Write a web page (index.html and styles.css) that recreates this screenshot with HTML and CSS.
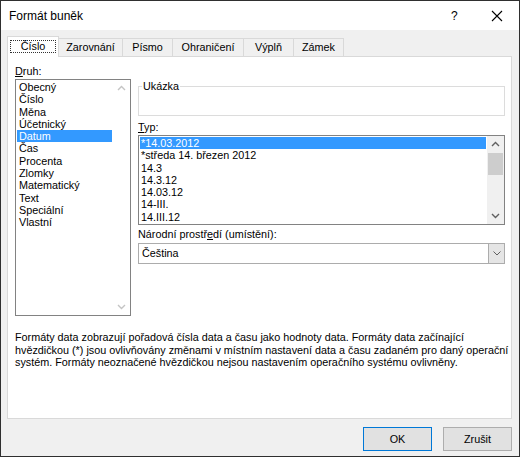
FILE: index.html
```html
<!DOCTYPE html>
<html lang="cs">
<head>
<meta charset="utf-8">
<title>Formát buněk</title>
<link rel="stylesheet" href="styles.css">
</head>
<body>
<div class="window">
  <div class="titlebar">
    <span class="title">Formát buněk</span>
    <span class="help">?</span>
    <svg class="close" width="12" height="12" viewBox="0 0 12 12"><path d="M1 1 L11 11 M11 1 L1 11" stroke="#000" stroke-width="1.1" fill="none"/></svg>
  </div>
  <div class="content">
    <div class="tabs">
      <div class="tab active"><span class="focus">Číslo</span></div>
      <div class="tab t-align">Zarovnání</div>
      <div class="tab t-font">Písmo</div>
      <div class="tab t-border">Ohraničení</div>
      <div class="tab t-fill">Výplň</div>
      <div class="tab t-lock">Zámek</div>
    </div>
    <div class="panel">
      <div class="top">
        <div class="left">
          <div class="label label-kind"><u>D</u>ruh:</div>
          <div class="listbox kinds">
            <ul class="items">
              <li>Obecný</li>
              <li>Číslo</li>
              <li>Měna</li>
              <li>Účetnický</li>
              <li class="selected">Datum</li>
              <li>Čas</li>
              <li>Procenta</li>
              <li>Zlomky</li>
              <li>Matematický</li>
              <li>Text</li>
              <li>Speciální</li>
              <li>Vlastní</li>
            </ul>
            <div class="vscroll disabled">
              <svg class="arrow" width="9" height="6" viewBox="0 0 9 6"><path d="M1 5 L4.5 1.5 L8 5" stroke="#c4c4c4" stroke-width="1.4" fill="none"/></svg>
              <div class="track"></div>
              <svg class="arrow" width="9" height="6" viewBox="0 0 9 6"><path d="M1 1 L4.5 4.5 L8 1" stroke="#c4c4c4" stroke-width="1.4" fill="none"/></svg>
            </div>
          </div>
        </div>
        <div class="right">
          <fieldset class="sample">
            <legend>Ukázka</legend>
          </fieldset>
          <div class="label label-type"><u>T</u>yp:</div>
          <div class="listbox types">
            <ul class="items">
              <li class="selected">*14.03.2012</li>
              <li>*středa 14. březen 2012</li>
              <li>14.3</li>
              <li>14.3.12</li>
              <li>14.03.12</li>
              <li>14-III.</li>
              <li>14.III.12</li>
            </ul>
            <div class="vscroll">
              <svg class="arrow" width="9" height="6" viewBox="0 0 9 6"><path d="M1 5 L4.5 1.5 L8 5" stroke="#606060" stroke-width="1.4" fill="none"/></svg>
              <div class="track"><div class="thumb"></div></div>
              <svg class="arrow" width="9" height="6" viewBox="0 0 9 6"><path d="M1 1 L4.5 4.5 L8 1" stroke="#606060" stroke-width="1.4" fill="none"/></svg>
            </div>
          </div>
          <div class="label label-locale">Národní prostř<u>e</u>dí (umístění):</div>
          <div class="combo">
            <span class="combo-value">Čeština</span>
            <span class="combo-btn"><svg width="8" height="5" viewBox="0 0 8 5"><path d="M0.5 0.5 L4 4 L7.5 0.5" stroke="#606060" stroke-width="1" fill="none"/></svg></span>
          </div>
        </div>
      </div>
      <p class="desc">Formáty data zobrazují pořadová čísla data a času jako hodnoty data. Formáty data začínající<br>hvězdičkou (*) jsou ovlivňovány změnami v místním nastavení data a času zadaném pro daný operační<br>systém. Formáty neoznačené hvězdičkou nejsou nastavením operačního systému ovlivněny.</p>
    </div>
    <div class="buttons">
      <button class="btn default">OK</button>
      <button class="btn">Zrušit</button>
    </div>
  </div>
</div>
</body>
</html>
```
FILE: styles.css
```css
* { box-sizing: border-box; }
html, body { margin: 0; padding: 0; }
body {
  font-family: "Liberation Sans", Arial, sans-serif;
  font-size: 10.8px;
  color: #000;
  background: #f0f0f0;
}
.window {
  width: 520px;
  height: 457px;
  border: 1px solid #2f2f2f;
  background: #f0f0f0;
  display: flex;
  flex-direction: column;
}
.titlebar {
  height: 29px;
  background: #fff;
  display: flex;
  align-items: center;
  padding-left: 8px;
  flex: none;
}
.title { font-size: 12px; flex: 1; }
.help { font-size: 12px; width: 10px; margin-right: 30px; }
.close { margin-right: 16px; }

.content { flex: 1; display: flex; flex-direction: column; }
.tabs {
  height: 26px;
  display: flex;
  align-items: flex-end;
  padding-left: 6px;
  flex: none;
}
.tab {
  height: 18px;
  border: 1px solid #d9d9d9;
  border-bottom: none;
  margin-left: -1px;
  background: #f0f0f0;
  display: flex;
  align-items: center;
  justify-content: center;
  line-height: 13px;
}
.tab.active {
  margin-left: 0;
  width: 52px;
  height: 21px;
  margin-bottom: -1px;
  background: #fff;
  position: relative;
  z-index: 1;
  align-items: flex-start;
  padding: 3px 2px 0;
}
.focus {
  display: block;
  width: 100%;
  height: 13px;
  border: 1px dotted #333;
  text-align: center;
  line-height: 11px;
}
.t-align { width: 65px; }
.t-font { width: 51px; }
.t-border { width: 72px; }
.t-fill { width: 51px; }
.t-lock { width: 51px; }

.panel {
  height: 363px;
  margin: 0 7px 0 6px;
  border: 1px solid #d9d9d9;
  background: #fff;
  flex: none;
  padding: 8px 6px 0 7px;
}
.top {
  display: grid;
  grid-template-columns: 116px 367px;
  column-gap: 7px;
  align-items: start;
}
.label { line-height: 13px; height: 13px; white-space: nowrap; }
.label-kind { margin-bottom: 1px; }
.label-type { margin: 5px 0 1px; }
.label-locale { margin: 3px 0 2px; }

.listbox {
  border: 1px solid #828282;
  display: flex;
  background: #fff;
}
.kinds { height: 237px; }
.types { height: 90px; }
.items {
  list-style: none;
  margin: 0;
  padding: 1px;
  flex: 1;
  overflow: hidden;
}
.items li {
  line-height: 12.3px;
  height: 12.3px;
  padding-left: 2px;
  white-space: nowrap;
}
.types .items li { padding-left: 1px; }
.items li.selected { background: #3399ff; color: #fff; }

.vscroll {
  width: 17px;
  display: flex;
  flex-direction: column;
  align-items: center;
  background: #f0f0f0;
}
.vscroll.disabled { background: #fff; }
.vscroll .arrow { flex: none; margin: 5px 0; }
.track { flex: 1; width: 100%; padding: 0 1px; }
.thumb { height: 22px; margin-top: 1px; background: #cdcdcd; }

.sample {
  margin: 15px 0 0;
  padding: 0;
  border: 1px solid #dcdcdc;
  height: 36px;
  min-width: 0;
}
.sample legend {
  margin-left: 3px;
  padding: 0 1px;
  line-height: 13px;
}

.combo {
  height: 21px;
  border: 1px solid #acacac;
  display: flex;
  align-items: stretch;
}
.combo-value { flex: 1; padding-left: 3px; line-height: 19px; }
.combo-btn {
  width: 16px;
  background: #e5e5e5;
  border-left: 1px solid #acacac;
  display: flex;
  align-items: center;
  justify-content: center;
}

.desc {
  margin: 15px 0 0;
  line-height: 12.7px;
  white-space: nowrap;
}

.buttons {
  display: flex;
  justify-content: flex-end;
  gap: 11px;
  padding: 8px 7px 0 0;
}
.btn {
  width: 69px;
  height: 24px;
  font: inherit;
  color: #000;
  background: #e1e1e1;
  border: 1px solid #adadad;
  padding: 0;
}
.btn.default { border-color: #0078d7; }
```
